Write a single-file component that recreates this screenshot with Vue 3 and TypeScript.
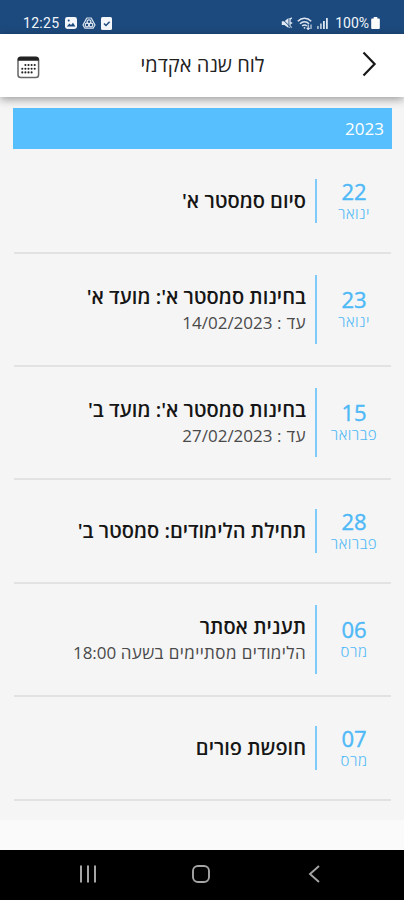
<script setup lang="ts">
interface CalendarEvent {
  day: string
  month: string
  title: string
  note?: { label: string; value: string }
}

const year = '2023'

const events: CalendarEvent[] = [
  { day: '22', month: 'ינואר', title: "סיום סמסטר א'" },
  { day: '23', month: 'ינואר', title: "בחינות סמסטר א': מועד א'", note: { label: 'עד :', value: '14/02/2023' } },
  { day: '15', month: 'פברואר', title: "בחינות סמסטר א': מועד ב'", note: { label: 'עד :', value: '27/02/2023' } },
  { day: '28', month: 'פברואר', title: "תחילת הלימודים: סמסטר ב'" },
  { day: '06', month: 'מרס', title: 'תענית אסתר', note: { label: 'הלימודים מסתיימים בשעה', value: '18:00' } },
  { day: '07', month: 'מרס', title: 'חופשת פורים' },
]

const dots: { x: number; y: number }[] = []
for (let row = 0; row < 3; row++) {
  for (let col = 0; col < 5; col++) {
    if ((row === 0 && col === 0) || (row === 2 && col === 4)) continue
    dots.push({ x: 5.3 + col * 3.1, y: 9 + row * 3.7 })
  }
}
</script>

<template>
  <div class="screen">
    <div class="status">
      <div class="status-left">
        <span class="clock">12:25</span>
        <svg width="12" height="12" viewBox="0 0 12 12">
          <rect width="12" height="12" rx="2.4" fill="#f4f7fb" />
          <path d="M1.8 9.6 4.4 6.4 6 8 8 5.8l2.4 3.8z" fill="#1d4a7e" />
          <circle cx="3.7" cy="3.6" r="1" fill="#1d4a7e" />
        </svg>
        <svg width="14" height="12" viewBox="0 0 14 12" fill="none" stroke="#dfe8f2" stroke-width="1.2">
          <path d="M4.8 1h4.4L13 8l-1.900 3.2H2.900L1 8z" stroke-linejoin="round" />
          <circle cx="7" cy="4.8" r="1.9" />
          <circle cx="5" cy="8" r="1.8" />
          <circle cx="9" cy="8" r="1.8" />
        </svg>
        <svg width="11" height="13" viewBox="0 0 11 13">
          <rect width="11" height="13" rx="1.5" fill="#f4f7fb" />
          <path d="m3 6.5 2 2 3.6-3.8" fill="none" stroke="#1d4a7e" stroke-width="1.5" />
        </svg>
      </div>
      <div class="status-right">
        <svg width="12" height="12" viewBox="0 0 12 12">
          <path d="M.8 4.2h2.6L7.5.9v10.2L3.4 7.9H.8z" fill="#dfe8f2" />
          <path d="M9 2.5 10.8.8M9 6h2.200M9 9.2l1.8 1.6M9 1v10" stroke="#dfe8f2" stroke-width="1.3" />
          <path d="m.5 1.2 10 10" stroke="#1d4a7e" stroke-width="1" />
        </svg>
        <svg width="16" height="13" viewBox="0 0 16 13" fill="none" stroke="#dfe8f2" stroke-width="1.5">
          <path d="M.8 4.2c4-4 9.4-4 13.4 0M3 6.7c2.700-2.700 6.300-2.700 9 0M5.2 9c1.300-1.400 3.300-1.400 4.600 0" />
          <circle cx="7.5" cy="10.8" r=".9" fill="#dfe8f2" stroke="none" />
          <path d="M11.2 7.500v5M9.800 11l1.400 1.500L12.600 11M14 12V7.500" stroke-width="1.1" />
        </svg>
        <svg width="12" height="11" viewBox="0 0 12 11" fill="#dfe8f2">
          <rect x="0" y="8" width="1.8" height="3" opacity=".7" />
          <rect x="3" y="5.5" width="1.8" height="5.5" opacity=".8" />
          <rect x="6" y="3" width="1.8" height="8" />
          <rect x="9" y="0" width="1.8" height="11" />
        </svg>
        <span class="percent">100%</span>
        <svg class="battery" width="9" height="12" viewBox="0 0 9 12">
          <path d="M2.7 0h3.6v1.5H8q.8 0 .8.9v8.7q0 .9-.8.9H1q-.8 0-.8-.9V2.4q0-.9.8-.9h1.7z" fill="#fff" />
        </svg>
      </div>
    </div>

    <header class="header">
      <svg class="calendar" width="23" height="23" viewBox="0 0 23 23">
        <rect x="1" y="1.2" width="20.6" height="20.4" rx="2.8" fill="#fff" stroke="#666" stroke-width="1.5" />
        <path d="M.8 4.7V3.4Q.8.8 3.4.8h15.8q2.6 0 2.6 2.6v1.3z" fill="#222" />
        <circle v-for="(dot, i) in dots" :key="i" :cx="dot.x" :cy="dot.y" r="1.05" fill="#222" />
      </svg>
      <h1 class="heading">לוח שנה אקדמי</h1>
      <svg class="chevron" width="15" height="26" viewBox="0 0 15 26">
        <path d="M1.5 1.5 12.6 13 1.5 24.5" fill="none" stroke="#181818" stroke-width="2.2" />
      </svg>
    </header>

    <main class="content">
      <div class="year">{{ year }}</div>
      <article v-for="event in events" :key="event.day" class="event" :class="{ tall: event.note }">
        <div class="date">
          <span class="day">{{ event.day }}</span>
          <span class="month">{{ event.month }}</span>
        </div>
        <div class="details">
          <h2 class="title">{{ event.title }}</h2>
          <p v-if="event.note" class="note">
            <span class="note-label">{{ event.note.label }}</span> {{ event.note.value }}
          </p>
        </div>
      </article>
    </main>

    <div class="footer-gap"></div>
    <nav class="navbar">
      <svg width="18" height="18" viewBox="0 0 18 18" stroke="#a5a5a5" stroke-width="2">
        <path d="M2 .5v17M9 .5v17M16 .5v17" />
      </svg>
      <svg width="18" height="18" viewBox="0 0 18 18">
        <rect x="1" y="1" width="16" height="16" rx="5" fill="none" stroke="#a5a5a5" stroke-width="1.9" />
      </svg>
      <svg width="18" height="18" viewBox="0 0 18 18">
        <path d="M14 1 5 9l9 8" fill="none" stroke="#a5a5a5" stroke-width="1.9" />
      </svg>
    </nav>
  </div>
</template>

<style>
body {
  margin: 0;
  background: #fafafa;
}
</style>

<style scoped>
.screen {
  display: flex;
  flex-direction: column;
  width: 404px;
  height: 900px;
  overflow: hidden;
  background: #f5f5f5;
  font-family: 'Open Sans', 'Noto Sans', sans-serif;
}
.screen svg {
  display: block;
  flex: none;
}
.status {
  display: flex;
  flex: none;
  box-sizing: border-box;
  height: 34px;
  padding: 13px 24px 0 23px;
  justify-content: space-between;
  background: #1d4a7e;
  color: #f2f6fb;
  font: 14px/20px Roboto, sans-serif;
}
.status-left,
.status-right {
  display: flex;
  height: 20px;
  align-items: center;
}
.status-left {
  gap: 5px;
}
.clock {
  width: 37px;
  letter-spacing: 0.3px;
}
.status-right {
  gap: 4px;
}
.percent {
  margin-left: 2px;
}
.battery {
  margin-left: -2px;
}
.header {
  display: flex;
  flex: none;
  position: relative;
  z-index: 1;
  box-sizing: border-box;
  height: 63px;
  padding: 0 27px 0 17px;
  align-items: center;
  justify-content: space-between;
  background: #fff;
  box-shadow: 0 2px 9px rgba(0, 0, 0, 0.4);
}
.calendar {
  margin-top: 4px;
}
.chevron {
  margin-bottom: 3px;
}
.heading {
  margin: 0 0 1px 3px;
  color: #222;
  font-size: 20px;
  font-weight: 400;
  line-height: 28px;
  direction: rtl;
}
.content {
  height: 723px;
  flex: none;
  padding: 11px 12px 0 13px;
  box-sizing: border-box;
  direction: rtl;
}
.year {
  box-sizing: border-box;
  height: 41px;
  margin-bottom: 1px;
  padding-right: 8px;
  background: #57bffe;
  color: #fff;
  font-size: 17px;
  line-height: 41px;
}
.event {
  display: flex;
  box-sizing: border-box;
  height: 104px;
  margin: 0 1px;
  padding: 29px 0;
  border-bottom: 2px solid #e2e2e2;
}
.event.tall {
  height: 113px;
  padding: 21px 0;
}
.date {
  display: flex;
  width: 74px;
  flex-direction: column;
  align-items: center;
  justify-content: center;
  color: #4fb9f7;
}
.day {
  font-size: 22px;
  line-height: 23px;
  -webkit-text-stroke: 0.4px #4fb9f7;
}
.month {
  font-size: 15px;
  font-weight: 300;
  letter-spacing: 0.5px;
  line-height: 20px;
}
.details {
  display: flex;
  flex: 1;
  padding-right: 9px;
  flex-direction: column;
  justify-content: center;
  border-right: 2px solid #7ecafa;
}
.title {
  margin: 0;
  color: #161616;
  font-size: 20px;
  font-weight: 600;
  line-height: 26px;
  white-space: nowrap;
}
.note {
  margin: 0;
  color: #4a4a4a;
  font-size: 17px;
  font-weight: 400;
  line-height: 26px;
  white-space: nowrap;
}
.note-label {
  letter-spacing: 0.4px;
}
.footer-gap {
  flex: none;
  height: 30px;
  background: #fafafa;
}
.navbar {
  display: flex;
  flex: 1;
  padding: 0 81px 2px 79px;
  align-items: center;
  justify-content: space-between;
  background: #000;
}
</style>
